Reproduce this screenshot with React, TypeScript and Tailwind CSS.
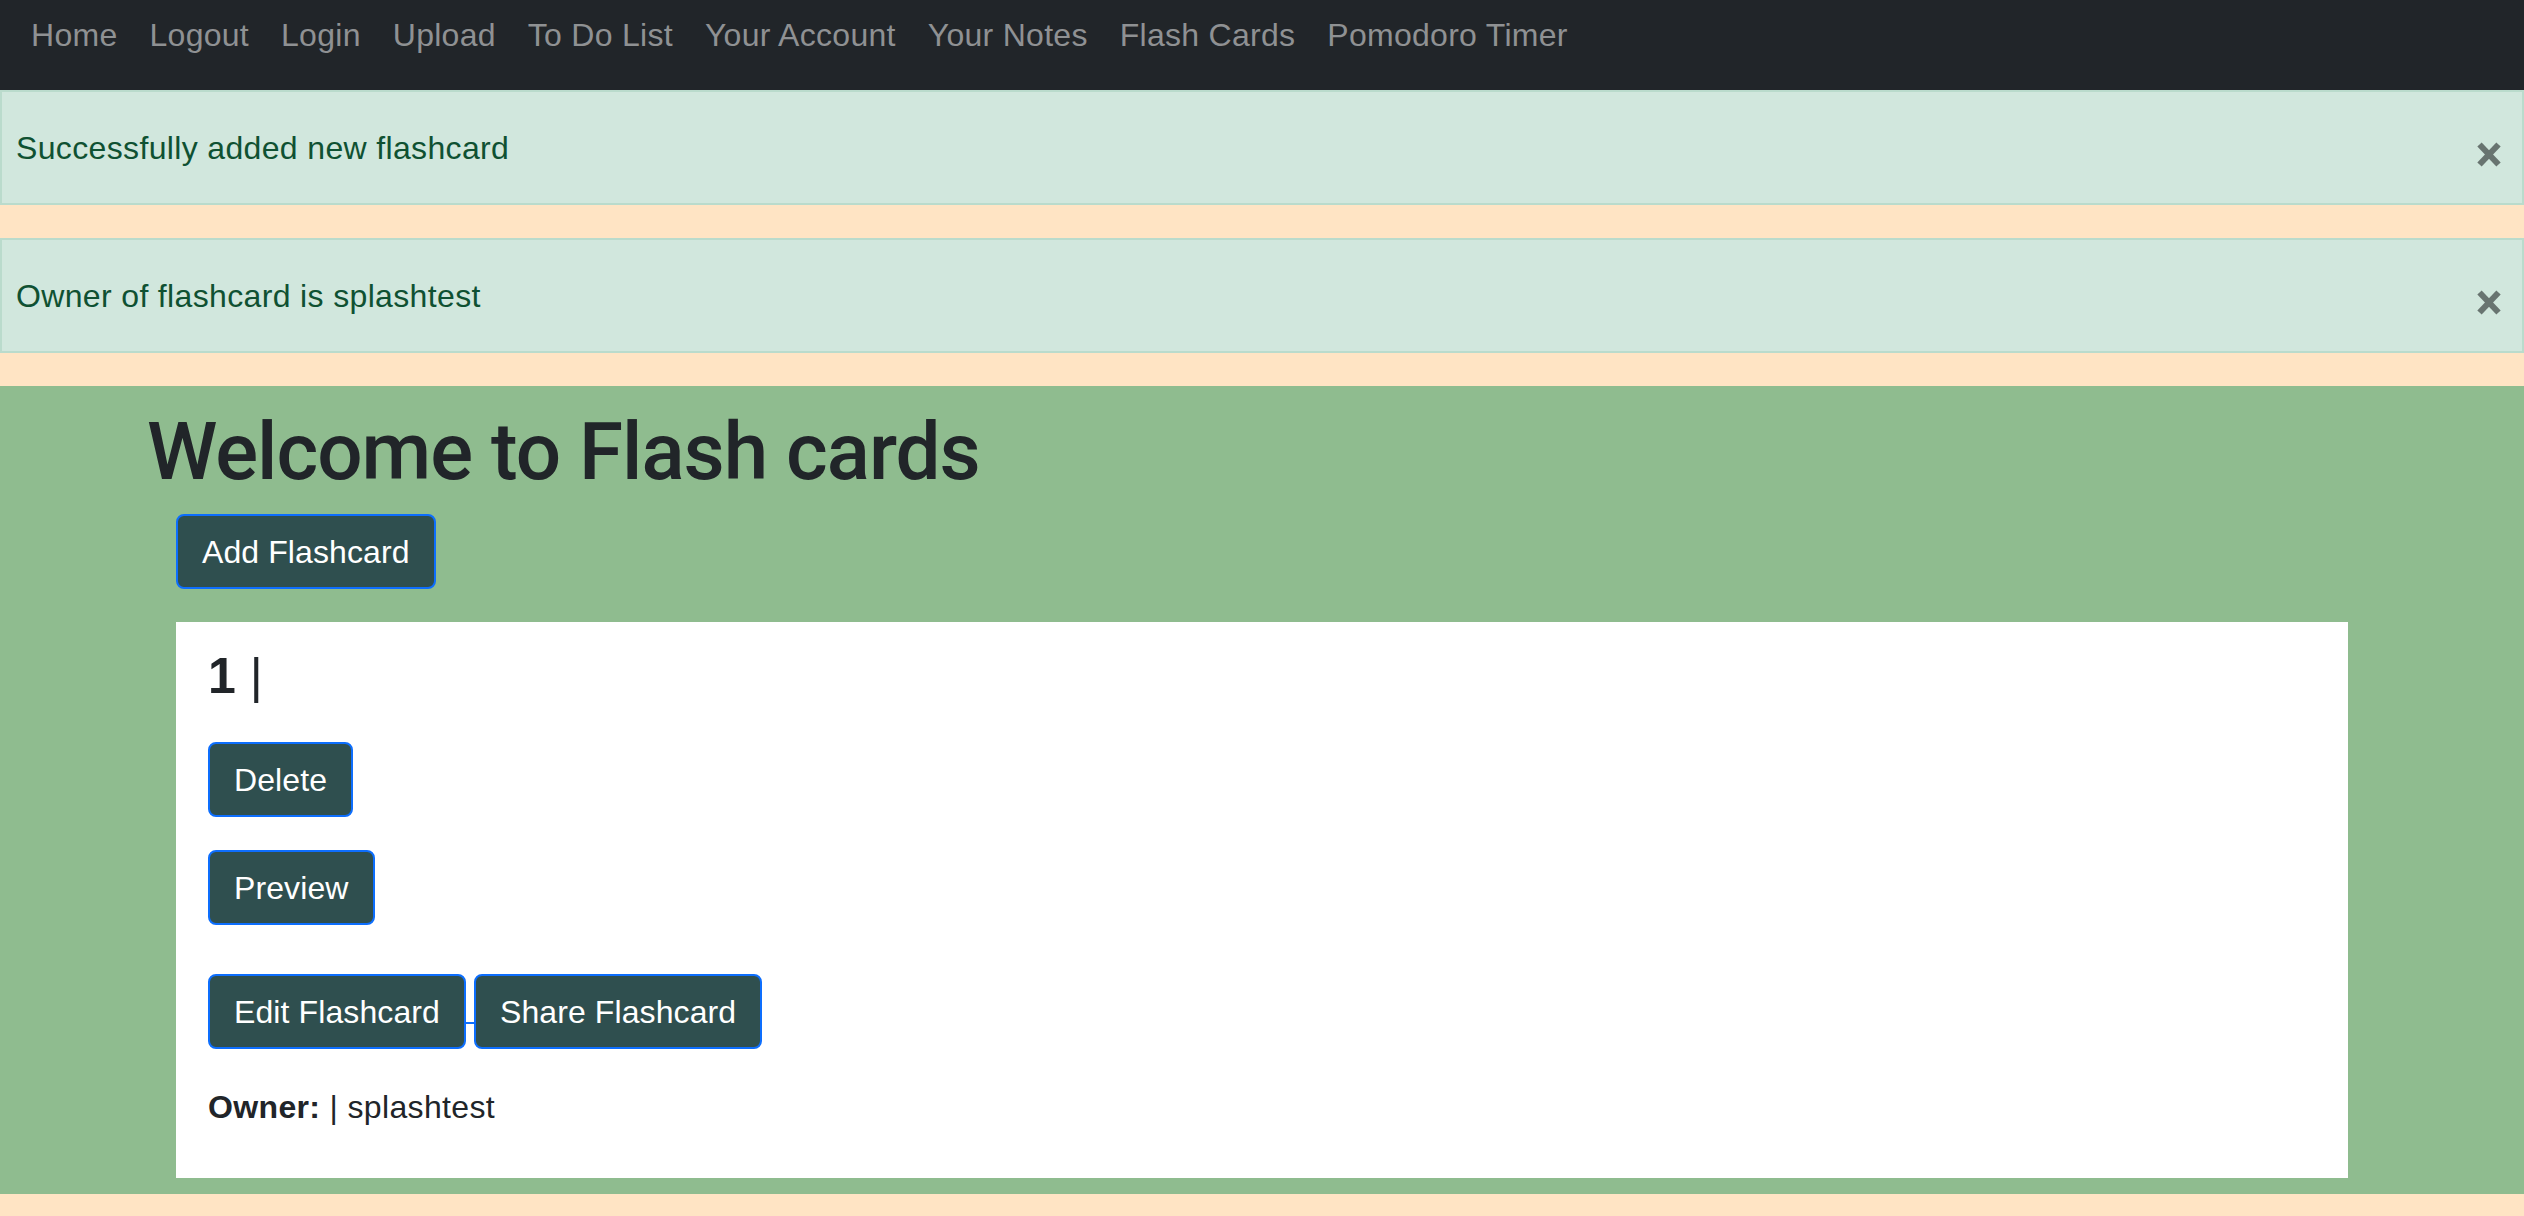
import React from "react";

const font = { fontFamily: '"Liberation Sans", Arial, Helvetica, sans-serif' };

function CloseX() {
  return (
    <svg width="24" height="25" viewBox="0 0 24 25" className="absolute top-[50px] right-[21px]">
      <line x1="2.5" y1="2.5" x2="21.5" y2="22.5" stroke="#687470" strokeWidth="6" />
      <line x1="21.5" y1="2.5" x2="2.5" y2="22.5" stroke="#687470" strokeWidth="6" />
    </svg>
  );
}

function Alert({ text }: { text: string }) {
  return (
    <div className="relative box-border h-[115px] mb-[33px] flex items-center border-2 border-[#badbcc] bg-[#d1e7dd] pl-[14px] text-[32px] leading-[48px] tracking-[0.35px] text-[#0f5132]">
      <span>{text}</span>
      <CloseX />
    </div>
  );
}

function Btn({ children }: { children: React.ReactNode }) {
  return (
    <div className="box-border inline-flex h-[75px] items-center rounded-[8px] border-2 border-[#0d6efd] bg-[#2f4f4f] px-[24px] text-[32px] leading-[48px] tracking-[0.1px] text-white">
      {children}
    </div>
  );
}

export default function App() {
  const links = ["Home", "Logout", "Login", "Upload", "To Do List", "Your Account", "Your Notes", "Flash Cards", "Pomodoro Timer"];
  return (
    <div style={font} className="min-h-[1216px] w-full bg-[#ffe4c4] text-[#212529]">
      <nav className="box-border flex h-[90px] items-start bg-[#212529] pl-[15px] pt-[11px]">
        {links.map((l) => (
          <span key={l} className="px-[16px] text-[32px] leading-[48px] tracking-[0.28px] text-[#8f9193] whitespace-nowrap">
            {l}
          </span>
        ))}
      </nav>
      <Alert text="Successfully added new flashcard" />
      <Alert text="Owner of flashcard is splashtest" />
      <section className="box-border bg-[#8fbc8f] px-[146px] pt-[18px] pb-[16px]">
        <h1
          style={{ fontFamily: 'Roboto, "Liberation Sans", Arial, sans-serif' }}
          className="text-[80px] leading-[96px] font-medium tracking-[-1px] text-[#212529] pl-[1px]"
        >
          Welcome to Flash cards
        </h1>
        <div className="px-[30px]">
          <div className="mt-[14px]">
            <Btn>Add Flashcard</Btn>
          </div>
          <div className="mt-[33px] box-border h-[556px] bg-white px-[32px] pt-[24px]">
            <div className="h-[60px] text-[50px] leading-[60px] whitespace-pre">
              <span className="font-bold">1</span> |
            </div>
            <div className="mt-[36px]">
              <Btn>Delete</Btn>
            </div>
            <div className="mt-[33px]">
              <Btn>Preview</Btn>
            </div>
            <div className="mt-[49px] flex items-start">
              <Btn>Edit Flashcard</Btn>
              <div className="mt-[48px] h-[2px] w-[8px] bg-[#0d6efd]" />
              <Btn>Share Flashcard</Btn>
            </div>
            <div className="mt-[34px] text-[32px] leading-[48px] tracking-[0.35px]">
              <span className="font-bold">Owner:</span> | splashtest
            </div>
          </div>
        </div>
      </section>
    </div>
  );
}
